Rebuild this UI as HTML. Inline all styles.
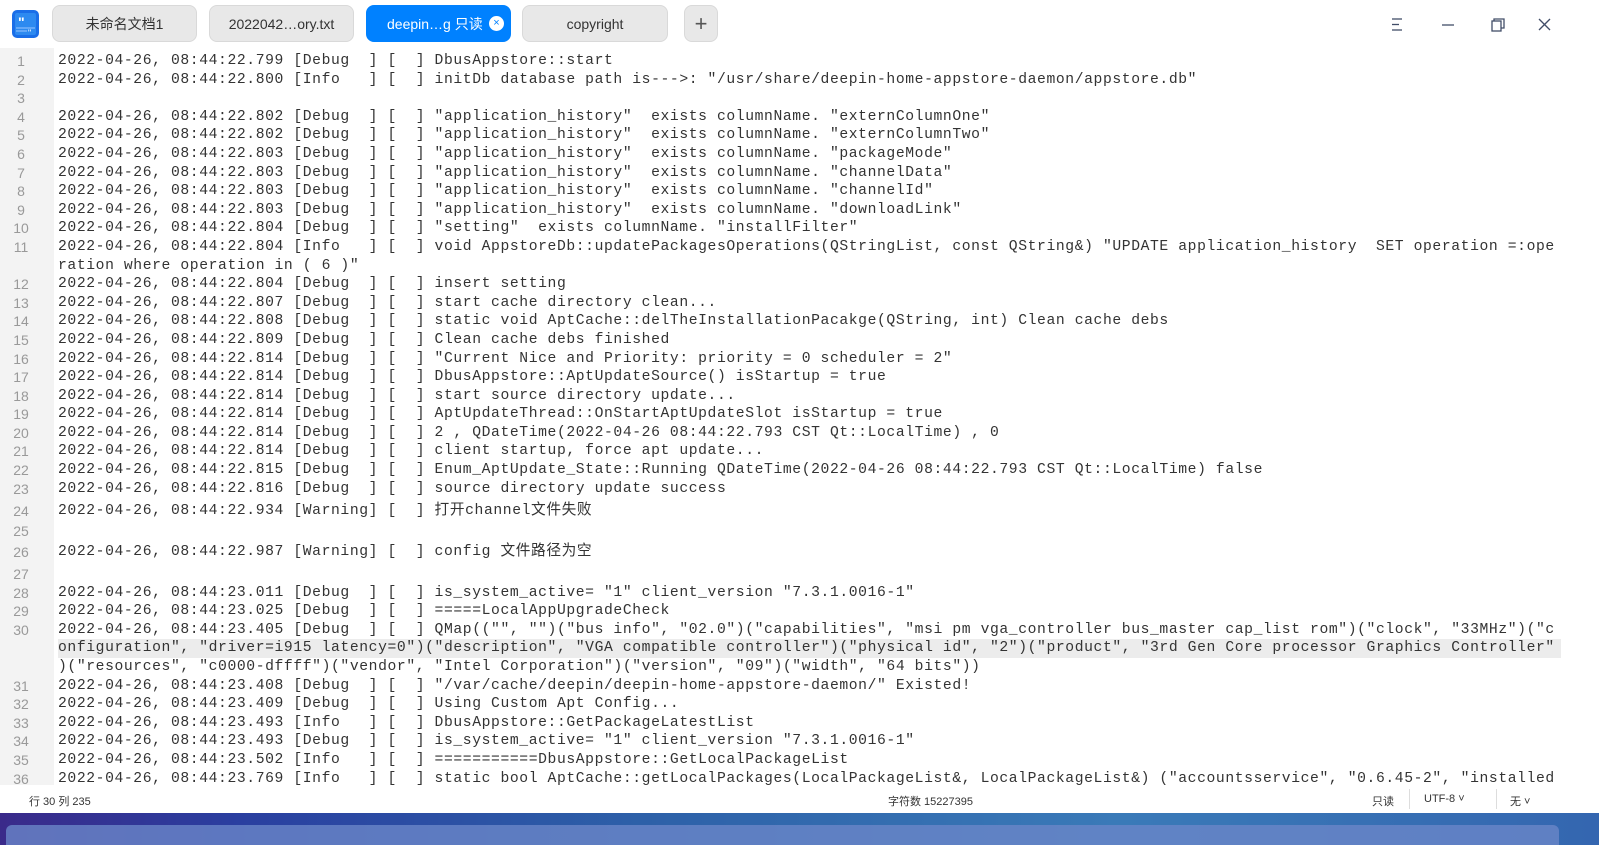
<!DOCTYPE html>
<html><head><meta charset="utf-8"><style>
*{margin:0;padding:0;box-sizing:border-box}
body{width:1599px;height:845px;overflow:hidden;background:#fff;font-family:"Liberation Sans","Noto Sans CJK SC",sans-serif;position:relative}
.title{position:absolute;left:0;top:0;width:1599px;height:48px;background:#fff}
.tab{position:absolute;top:5px;height:37px;border-radius:8px;background:#e8e8e8;border:1px solid #d9d9d9;font-size:14px;color:#333;display:flex;align-items:center;justify-content:center}
.tab.act{background:#0081ff;color:#fff;border-color:#0081ff}
.ed{position:absolute;left:0;top:48px;width:1599px;height:737px;overflow:hidden;background:#fff}
.gut{position:absolute;left:0;top:0;width:54px;height:737px;background:#f3f3f3}
.rows{position:absolute;left:0;top:4px;width:1599px}
.r{position:relative;height:18.6px;line-height:18.6px;font-family:"Liberation Mono","Noto Sans CJK SC",monospace;font-size:14.7px;letter-spacing:0.6px;color:#333;white-space:pre}
.r.c{height:21.7px;line-height:21.7px}
.n{position:absolute;left:0;width:42px;text-align:center;color:#999;font-size:14px;letter-spacing:0;font-family:"Liberation Sans",sans-serif}
.t{position:absolute;left:58px}
.hl{background:#ececec}
.sb{position:absolute;left:0;top:785px;width:1599px;height:28px;background:#fff;font-size:11px;color:#333}
.sb span{position:absolute;top:8px}
.dock{position:absolute;left:0;top:813px;width:1599px;height:32px;background:linear-gradient(90deg,#3a2a8a 0%,#2a3fa0 15%,#2d60a8 40%,#3a7ab8 70%,#3466b0 100%)}
.dock i{position:absolute;left:6px;top:12px;right:40px;height:20px;background:#6a86c8;border-radius:6px 6px 0 0;opacity:.8}
</style></head><body>
<div class="title">
<svg style="position:absolute;left:12px;top:10px" width="27" height="28" viewBox="0 0 27 28"><rect x="0" y="0" width="27" height="28" rx="5" fill="#1a6ee8"/><rect x="3" y="3" width="21" height="22" rx="2" fill="#2d8af0"/><text x="6" y="17" font-size="14" font-weight="bold" fill="#fff" font-family="Liberation Sans">"</text><text x="16" y="26" font-size="9" fill="#fff" font-family="Liberation Sans">"</text><line x1="4" y1="18" x2="23" y2="18" stroke="#9cc6ff" stroke-width="1"/><line x1="4" y1="21" x2="15" y2="21" stroke="#9cc6ff" stroke-width="1"/></svg>
<div class="tab" style="left:52px;width:145px">未命名文档1</div>
<div class="tab" style="left:209px;width:145px">2022042…ory.txt</div>
<div class="tab act" style="left:366px;width:145px;justify-content:flex-start;padding-left:20px">deepin…g 只读<span style="position:absolute;right:6px;top:10px;width:15px;height:15px;border-radius:50%;background:#fff;color:#0081ff;font-size:11px;line-height:14px;text-align:center">×</span></div>
<div class="tab" style="left:522px;width:146px">copyright</div>
<div class="tab" style="left:684px;width:34px;font-size:22px;color:#555">+</div>
<svg style="position:absolute;left:1390px;top:17px" width="220" height="16"><g stroke="#414d68" stroke-width="1.3" fill="none"><line x1="2" y1="2" x2="12" y2="2"/><line x1="2" y1="7.5" x2="9" y2="7.5"/><line x1="2" y1="13" x2="12" y2="13"/><line x1="52" y1="8" x2="64" y2="8"/><rect x="102" y="4" width="9" height="10"/><polyline points="104,4 104,2 114,2 114,11 111,11"/><line x1="149" y1="2" x2="160" y2="13"/><line x1="160" y1="2" x2="149" y2="13"/></g></svg>
</div>
<div class="ed"><div class="gut"></div>
<div class="rows">
<div class="r"><span class="n">1</span><span class="t">2022-04-26, 08:44:22.799 [Debug  ] [  ] DbusAppstore::start</span></div>
<div class="r"><span class="n">2</span><span class="t">2022-04-26, 08:44:22.800 [Info   ] [  ] initDb database path is---&gt;: "/usr/share/deepin-home-appstore-daemon/appstore.db"</span></div>
<div class="r"><span class="n">3</span></div>
<div class="r"><span class="n">4</span><span class="t">2022-04-26, 08:44:22.802 [Debug  ] [  ] "application_history"  exists columnName. "externColumnOne"</span></div>
<div class="r"><span class="n">5</span><span class="t">2022-04-26, 08:44:22.802 [Debug  ] [  ] "application_history"  exists columnName. "externColumnTwo"</span></div>
<div class="r"><span class="n">6</span><span class="t">2022-04-26, 08:44:22.803 [Debug  ] [  ] "application_history"  exists columnName. "packageMode"</span></div>
<div class="r"><span class="n">7</span><span class="t">2022-04-26, 08:44:22.803 [Debug  ] [  ] "application_history"  exists columnName. "channelData"</span></div>
<div class="r"><span class="n">8</span><span class="t">2022-04-26, 08:44:22.803 [Debug  ] [  ] "application_history"  exists columnName. "channelId"</span></div>
<div class="r"><span class="n">9</span><span class="t">2022-04-26, 08:44:22.803 [Debug  ] [  ] "application_history"  exists columnName. "downloadLink"</span></div>
<div class="r"><span class="n">10</span><span class="t">2022-04-26, 08:44:22.804 [Debug  ] [  ] "setting"  exists columnName. "installFilter"</span></div>
<div class="r"><span class="n">11</span><span class="t">2022-04-26, 08:44:22.804 [Info   ] [  ] void AppstoreDb::updatePackagesOperations(QStringList, const QString&amp;) "UPDATE application_history  SET operation =:ope</span></div>
<div class="r"><span class="t">ration where operation in ( 6 )"</span></div>
<div class="r"><span class="n">12</span><span class="t">2022-04-26, 08:44:22.804 [Debug  ] [  ] insert setting</span></div>
<div class="r"><span class="n">13</span><span class="t">2022-04-26, 08:44:22.807 [Debug  ] [  ] start cache directory clean...</span></div>
<div class="r"><span class="n">14</span><span class="t">2022-04-26, 08:44:22.808 [Debug  ] [  ] static void AptCache::delTheInstallationPacakge(QString, int) Clean cache debs</span></div>
<div class="r"><span class="n">15</span><span class="t">2022-04-26, 08:44:22.809 [Debug  ] [  ] Clean cache debs finished</span></div>
<div class="r"><span class="n">16</span><span class="t">2022-04-26, 08:44:22.814 [Debug  ] [  ] "Current Nice and Priority: priority = 0 scheduler = 2"</span></div>
<div class="r"><span class="n">17</span><span class="t">2022-04-26, 08:44:22.814 [Debug  ] [  ] DbusAppstore::AptUpdateSource() isStartup = true</span></div>
<div class="r"><span class="n">18</span><span class="t">2022-04-26, 08:44:22.814 [Debug  ] [  ] start source directory update...</span></div>
<div class="r"><span class="n">19</span><span class="t">2022-04-26, 08:44:22.814 [Debug  ] [  ] AptUpdateThread::OnStartAptUpdateSlot isStartup = true</span></div>
<div class="r"><span class="n">20</span><span class="t">2022-04-26, 08:44:22.814 [Debug  ] [  ] 2 , QDateTime(2022-04-26 08:44:22.793 CST Qt::LocalTime) , 0</span></div>
<div class="r"><span class="n">21</span><span class="t">2022-04-26, 08:44:22.814 [Debug  ] [  ] client startup, force apt update...</span></div>
<div class="r"><span class="n">22</span><span class="t">2022-04-26, 08:44:22.815 [Debug  ] [  ] Enum_AptUpdate_State::Running QDateTime(2022-04-26 08:44:22.793 CST Qt::LocalTime) false</span></div>
<div class="r"><span class="n">23</span><span class="t">2022-04-26, 08:44:22.816 [Debug  ] [  ] source directory update success</span></div>
<div class="r c" style="height:22.5px;line-height:26px"><span class="n">24</span><span class="t">2022-04-26, 08:44:22.934 [Warning] [  ] 打开channel文件失败</span></div>
<div class="r c"><span class="n">25</span></div>
<div class="r c"><span class="n">26</span><span class="t">2022-04-26, 08:44:22.987 [Warning] [  ] config 文件路径为空</span></div>
<div class="r c" style="height:19.5px"><span class="n">27</span></div>
<div class="r"><span class="n">28</span><span class="t">2022-04-26, 08:44:23.011 [Debug  ] [  ] is_system_active= "1" client_version "7.3.1.0016-1"</span></div>
<div class="r"><span class="n">29</span><span class="t">2022-04-26, 08:44:23.025 [Debug  ] [  ] =====LocalAppUpgradeCheck</span></div>
<div class="r"><span class="n">30</span><span class="t">2022-04-26, 08:44:23.405 [Debug  ] [  ] QMap(("", "")("bus info", "02.0")("capabilities", "msi pm vga_controller bus_master cap_list rom")("clock", "33MHz")("c</span></div>
<div class="r"><span class="t hl" style="right:38px">onfiguration", "driver=i915 latency=0")("description", "VGA compatible controller")("physical id", "2")("product", "3rd Gen Core processor Graphics Controller"</span></div>
<div class="r"><span class="t">)("resources", "c0000-dffff")("vendor", "Intel Corporation")("version", "09")("width", "64 bits"))</span></div>
<div class="r"><span class="n">31</span><span class="t">2022-04-26, 08:44:23.408 [Debug  ] [  ] "/var/cache/deepin/deepin-home-appstore-daemon/" Existed!</span></div>
<div class="r"><span class="n">32</span><span class="t">2022-04-26, 08:44:23.409 [Debug  ] [  ] Using Custom Apt Config...</span></div>
<div class="r"><span class="n">33</span><span class="t">2022-04-26, 08:44:23.493 [Info   ] [  ] DbusAppstore::GetPackageLatestList</span></div>
<div class="r"><span class="n">34</span><span class="t">2022-04-26, 08:44:23.493 [Debug  ] [  ] is_system_active= "1" client_version "7.3.1.0016-1"</span></div>
<div class="r"><span class="n">35</span><span class="t">2022-04-26, 08:44:23.502 [Info   ] [  ] ===========DbusAppstore::GetLocalPackageList</span></div>
<div class="r"><span class="n">36</span><span class="t">2022-04-26, 08:44:23.769 [Info   ] [  ] static bool AptCache::getLocalPackages(LocalPackageList&amp;, LocalPackageList&amp;) ("accountsservice", "0.6.45-2", "installed</span></div>
</div></div>
<div class="sb"><span style="left:29px">行 30  列 235</span><span style="left:888px">字符数 15227395</span><span style="left:1372px">只读</span><span style="left:1409px;top:4px;height:20px;border-left:1px solid #ddd"></span><span style="left:1424px">UTF-8 ˅</span><span style="left:1496px;top:4px;height:20px;border-left:1px solid #ddd"></span><span style="left:1510px">无 ˅</span></div>
<div class="dock"><i></i></div>
</body></html>
